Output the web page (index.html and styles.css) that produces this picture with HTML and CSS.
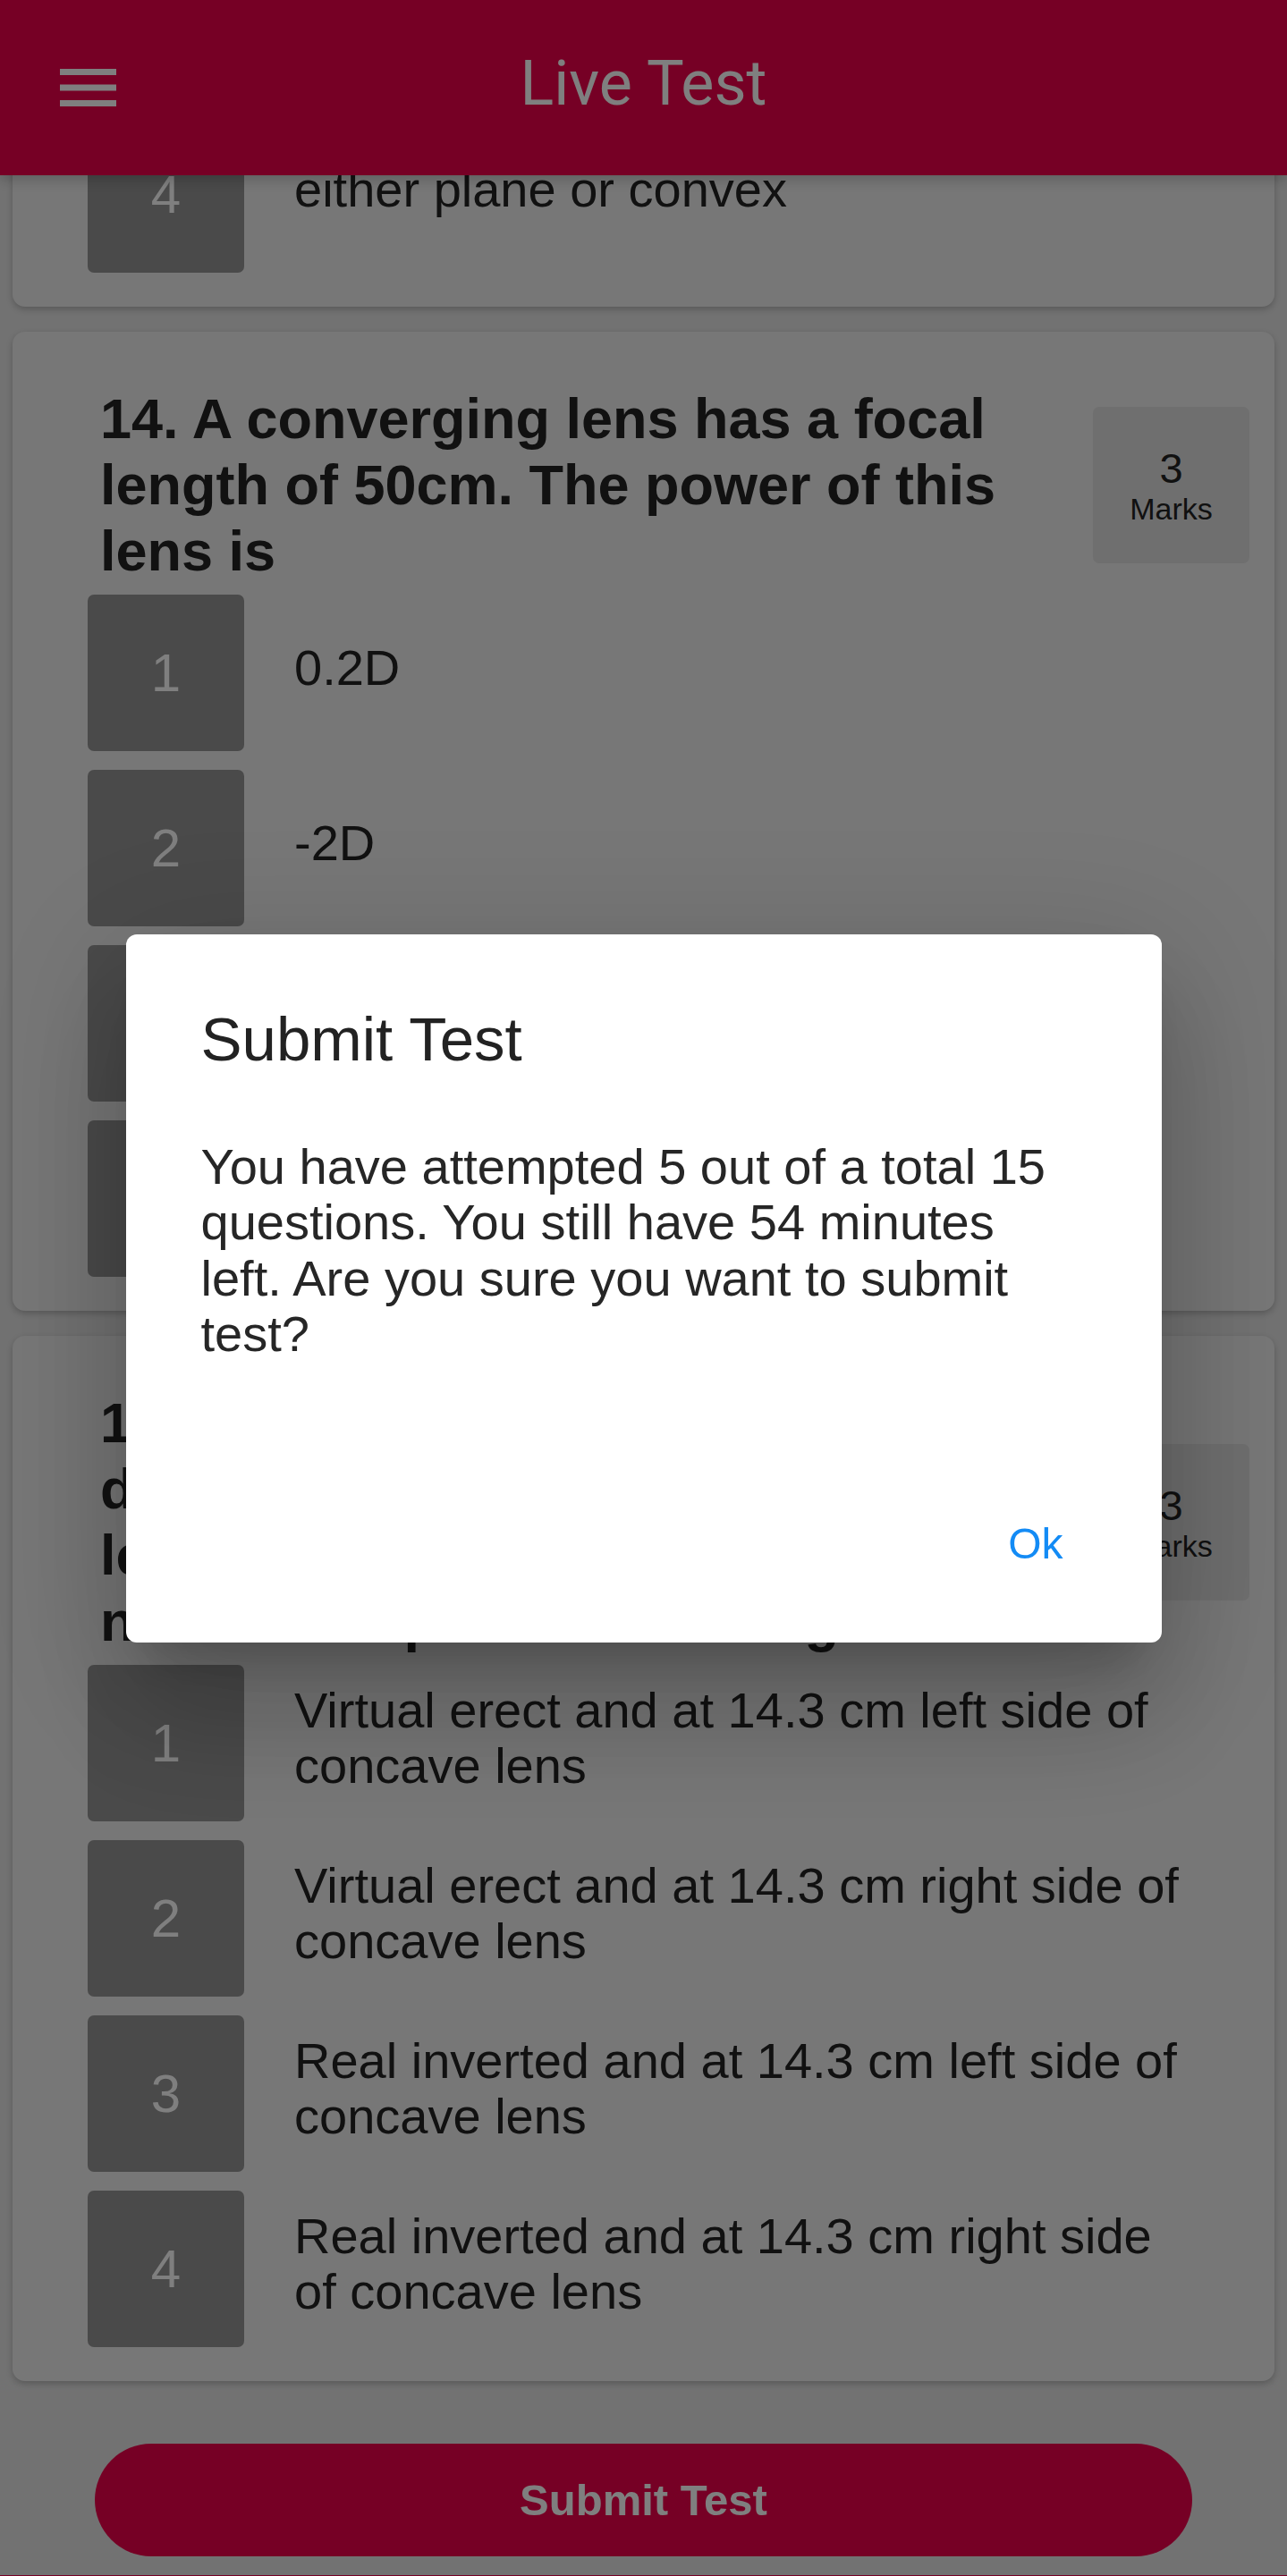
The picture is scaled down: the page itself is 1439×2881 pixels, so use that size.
FILE: index.html
```html
<!DOCTYPE html>
<html lang="en">
<head>
<meta charset="utf-8">
<title>Live Test</title>
<link rel="stylesheet" href="styles.css">
</head>
<body>
<header class="toolbar">
  <button class="menu-btn" aria-label="Menu">
    <svg width="63" height="42" viewBox="0 0 63 42"><rect x="0" y="0" width="63" height="7" fill="#fff"/><rect x="0" y="17.5" width="63" height="7" fill="#fff"/><rect x="0" y="35" width="63" height="7" fill="#fff"/></svg>
  </button>
  <h1 class="toolbar-title">Live Test</h1>
</header>

<main class="content">
  <div class="question-list">
    <section class="card">
      <div class="q-head">
        <h2 class="q-text">13. Each surface of a plano-convex lens is</h2>
        <div class="marks"><span class="marks-num">3</span><span class="marks-label">Marks</span></div>
      </div>
      <ul class="options">
        <li class="option"><span class="opt-num">1</span><span class="opt-text">concave</span></li>
        <li class="option"><span class="opt-num">2</span><span class="opt-text">plane</span></li>
        <li class="option"><span class="opt-num">3</span><span class="opt-text">convex</span></li>
        <li class="option"><span class="opt-num">4</span><span class="opt-text">either plane or convex</span></li>
      </ul>
    </section>

    <section class="card">
      <div class="q-head">
        <h2 class="q-text">14. A converging lens has a focal length of 50cm. The power of this lens is</h2>
        <div class="marks"><span class="marks-num">3</span><span class="marks-label">Marks</span></div>
      </div>
      <ul class="options">
        <li class="option"><span class="opt-num">1</span><span class="opt-text">0.2D</span></li>
        <li class="option"><span class="opt-num">2</span><span class="opt-text">-2D</span></li>
        <li class="option"><span class="opt-num">3</span><span class="opt-text">2D</span></li>
        <li class="option"><span class="opt-num">4</span><span class="opt-text">-0.2D</span></li>
      </ul>
    </section>

    <section class="card">
      <div class="q-head">
        <h2 class="q-text">15. A small object is placed at a distance of 50 cm from a concave lens of focal length 20 cm. Find the nature and position of image.</h2>
        <div class="marks"><span class="marks-num">3</span><span class="marks-label">Marks</span></div>
      </div>
      <ul class="options">
        <li class="option"><span class="opt-num">1</span><span class="opt-text">Virtual erect and at 14.3 cm left side of concave lens</span></li>
        <li class="option"><span class="opt-num">2</span><span class="opt-text">Virtual erect and at 14.3 cm right side of concave lens</span></li>
        <li class="option"><span class="opt-num">3</span><span class="opt-text">Real inverted and at 14.3 cm left side of concave lens</span></li>
        <li class="option"><span class="opt-num">4</span><span class="opt-text">Real inverted and at 14.3 cm right side of concave lens</span></li>
      </ul>
    </section>
  </div>

  <div class="submit-wrap">
    <button class="submit-btn">Submit Test</button>
  </div>
</main>

<footer class="footer"></footer>

<div class="backdrop">
  <div class="alert" role="dialog">
    <h2 class="alert-title">Submit Test</h2>
    <p class="alert-message">You have attempted 5 out of a total 15 questions. You still have 54 minutes left. Are you sure you want to submit test?</p>
    <div class="alert-buttons">
      <button class="alert-btn">Ok</button>
    </div>
  </div>
</div>
</body>
</html>
```

FILE: styles.css
```css
html, body {
  margin: 0;
  height: 2881px;
  overflow: hidden;
}

body {
  background: #e4e4e4;
  font-family: "Liberation Sans", Arial, sans-serif;
  color: #222;
}

button {
  font: inherit;
}

/* Toolbar */
.toolbar {
  height: 196px;
  background: #ec004a;
  display: grid;
  grid-template-columns: 1fr auto 1fr;
  align-items: center;
  position: relative;
  z-index: 2;
  box-shadow: 0 6px 12px rgba(0, 0, 0, 0.18);
}

.menu-btn {
  justify-self: start;
  margin-left: 67px;
  padding: 0;
  border: 0;
  background: none;
  width: 63px;
  height: 42px;
  display: block;
}

.menu-btn svg {
  display: block;
}

.toolbar-title {
  margin: 0 0 10px;
  font-family: Roboto, "Liberation Sans", sans-serif;
  font-weight: 400;
  font-size: 70px;
  line-height: 82px;
  color: #fff;
}

/* Content */
.content {
  height: 2684px;
  overflow: hidden;
}

.question-list {
  display: flex;
  flex-direction: column;
  gap: 28px;
  margin-top: -901px;
}

.card {
  margin: 0 14px;
  background: #eeeeee;
  border-radius: 14px;
  padding: 60px 84px 38px;
  box-shadow: 0 3px 7px rgba(0, 0, 0, 0.22);
}

.q-head {
  display: flex;
  align-items: center;
  gap: 28px;
  margin-right: -56px;
  padding-left: 14px;
}

.q-text {
  flex: 1;
  margin: 0;
  font-size: 63px;
  font-weight: 700;
  line-height: 74px;
  color: #222;
}

.marks {
  flex: none;
  width: 175px;
  height: 175px;
  border-radius: 7px;
  background: #dedede;
  display: flex;
  flex-direction: column;
  align-items: center;
  justify-content: center;
  color: #222;
}

.marks-num {
  font-size: 47px;
  line-height: 53px;
}

.marks-label {
  font-size: 34px;
  line-height: 38px;
}

.options {
  list-style: none;
  margin: 12px 0 0;
  padding: 0;
  display: flex;
  flex-direction: column;
  gap: 21px;
}

.option {
  display: flex;
  align-items: center;
  gap: 56px;
}

.opt-num {
  flex: none;
  width: 175px;
  height: 175px;
  border-radius: 7px;
  background: #949494;
  color: #fff;
  font-size: 60px;
  display: flex;
  align-items: center;
  justify-content: center;
}

.opt-text {
  flex: 1;
  font-size: 56px;
  line-height: 62.5px;
  padding-bottom: 11px;
  color: #222;
}

.submit-wrap {
  margin-top: 70px;
  display: flex;
  justify-content: center;
}

.submit-btn {
  width: 1227px;
  height: 126px;
  border: 0;
  border-radius: 63px;
  background: #ec004a;
  color: #fff;
  font-weight: 700;
  font-size: 49px;
}

.footer {
  height: 56px;
  background: #ec004a;
}

/* Alert overlay */
.backdrop {
  position: fixed;
  inset: 0;
  background: rgba(0, 0, 0, 0.5);
  display: flex;
  align-items: center;
  justify-content: center;
  z-index: 10;
}

.alert {
  width: 1158px;
  box-sizing: border-box;
  background: #fff;
  border-radius: 12px;
  padding-top: 78px;
  box-shadow: 0 38px 52px -24px rgba(0, 0, 0, 0.2),
              0 84px 133px 10px rgba(0, 0, 0, 0.14),
              0 31px 161px 28px rgba(0, 0, 0, 0.12);
}

.alert-title {
  margin: 0;
  padding: 0 84px;
  font-size: 69px;
  font-weight: 400;
  line-height: 80px;
  color: #222;
}

.alert-message {
  margin: 71px 0 0;
  padding: 0 100px 0 84px;
  font-size: 56px;
  line-height: 62.5px;
  color: #262626;
}

.alert-buttons {
  display: flex;
  justify-content: flex-end;
  padding: 148px 82px 56px;
}

.alert-btn {
  background: none;
  border: 0;
  padding: 28px;
  font-size: 48px;
  line-height: 53px;
  color: #138bf5;
}
```
